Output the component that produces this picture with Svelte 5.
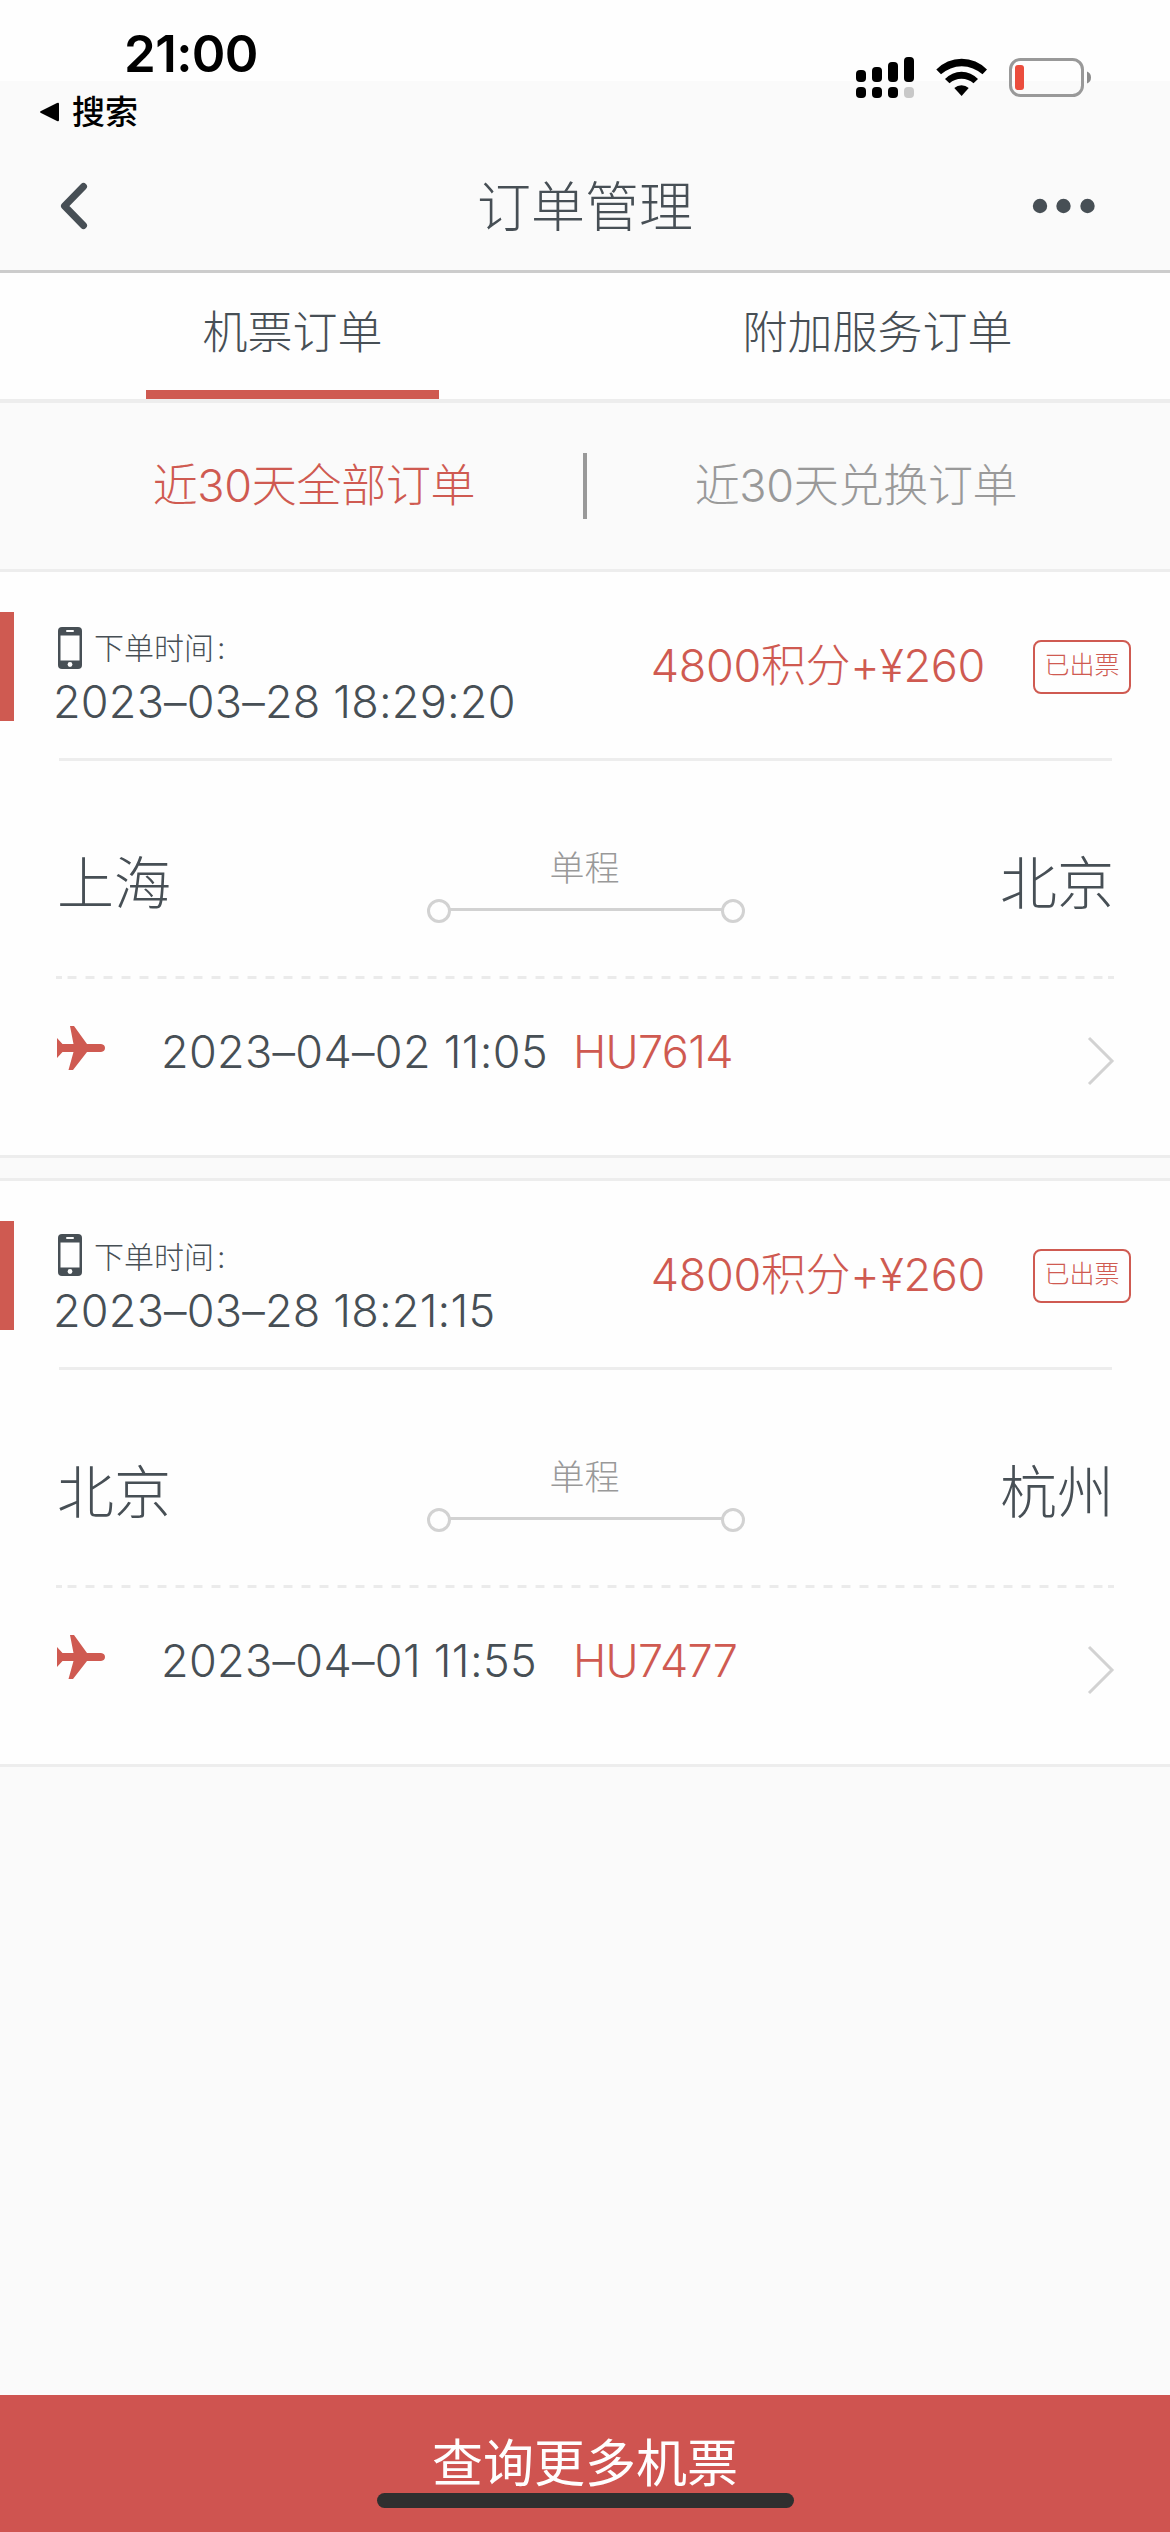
<script>
  const tabs = ["机票订单", "附加服务订单"];
  const filters = ["近30天全部订单", "近30天兑换订单"];

  const orders = [
    {
      created: "2023–03–28 18:29:20",
      price: "4800积分+¥260",
      status: "已出票",
      from: "上海",
      to: "北京",
      depart: "2023–04–02 11:05",
      flight: "HU7614"
    },
    {
      created: "2023–03–28 18:21:15",
      price: "4800积分+¥260",
      status: "已出票",
      from: "北京",
      to: "杭州",
      depart: "2023–04–01 11:55",
      flight: "HU7477"
    }
  ];

  let activeTab = $state(0);
  let activeFilter = $state(0);
</script>

<div class="page">
  <header>
    <div class="status">
      <div class="clock">21:00</div>
      <svg class="status-icons" width="240" height="44" viewBox="0 0 240 44">
        <rect x="1" y="15" width="10" height="12" rx="4" />
        <rect x="17" y="12" width="10" height="15" rx="4" />
        <rect x="33" y="7" width="10" height="20" rx="4" />
        <rect x="49" y="2" width="10" height="25" rx="4" />
        <rect x="1" y="32" width="10" height="11" rx="4" />
        <rect x="17" y="32" width="10" height="11" rx="4" />
        <rect x="33" y="32" width="10" height="11" rx="4" />
        <rect x="49" y="32" width="10" height="11" rx="4" fill="#c8c8c8" />
        <path d="M81.300 14.500 A35 35 0 0 1 132 14.500 L127.500 19.300 A31 31 0 0 0 86 19.300 Z" />
        <path d="M90 24 A22.500 22.500 0 0 1 123 24 L118.500 28.300 A18 18 0 0 0 94.500 28.300 Z" />
        <path d="M99.300 33 A10.500 10.500 0 0 1 113.700 33 L106.600 41 Z" />
        <rect x="155.500" y="4.500" width="72" height="36" rx="10" fill="none" stroke="#999" stroke-width="3" />
        <rect x="160" y="10" width="9" height="25" rx="3" fill="#eb4d3d" />
        <path d="M232 16.500 Q236 18 236 22.500 Q236 27 232 28.500 Z" fill="#8c8c8c" />
      </svg>
    </div>
    <div class="return">
      <svg width="22" height="22" viewBox="0 0 22 22">
        <path d="M2 10 L18 2 Q20 1 20 3 V19 Q20 21 18 20 L2 12 Q0 11 2 10 Z" />
      </svg>
      <span>搜索</span>
    </div>
    <nav>
      <svg width="28" height="48" viewBox="0 0 28 48">
        <path d="M23.500 4.500 L4.500 24 L23.500 43.500" fill="none" stroke="#474f55" stroke-width="7" stroke-linecap="round" stroke-linejoin="round" />
      </svg>
      <h1>订单管理</h1>
      <svg class="dots" width="64" height="16" viewBox="0 0 64 16" fill="#474f55">
        <circle cx="8" cy="8" r="7.200" />
        <circle cx="31.500" cy="8" r="7.200" />
        <circle cx="55.500" cy="8" r="7.200" />
      </svg>
    </nav>
  </header>

  <div class="tabs">
    {#each tabs as tab, i}
      <button class="tab" class:active={i === activeTab} onclick={() => (activeTab = i)}>
        <span>{tab}</span>
      </button>
    {/each}
  </div>

  <div class="filters">
    {#each filters as filter, i}
      <button class="filter" class:active={i === activeFilter} onclick={() => (activeFilter = i)}>
        {filter}
      </button>
    {/each}
  </div>

  <main>
    {#each orders as order}
      <section class="order">
        <div class="head">
          <div class="created">
            <div class="label">
              <svg width="24" height="42" viewBox="0 0 24 42">
                <rect width="24" height="42" rx="4" fill="#474f55" />
                <rect x="2.500" y="8.500" width="19" height="25" fill="#fefefe" />
                <rect x="8" y="3" width="8" height="2" rx="1" fill="#fefefe" />
                <circle cx="12" cy="37.500" r="2.400" fill="#fefefe" />
              </svg>
              <span>下单时间<i>:</i></span>
            </div>
            <div class="stamp">{order.created}</div>
          </div>
          <div class="price">{order.price}</div>
          <div class="badge">{order.status}</div>
        </div>

        <div class="route">
          <span class="city">{order.from}</span>
          <div class="way">
            <span>单程</span>
            <svg width="318" height="24" viewBox="0 0 318 24" fill="none" stroke="#d2d2d2" stroke-width="3">
              <circle cx="12" cy="12" r="10.500" />
              <path d="M23 10.500 H295" />
              <circle cx="306" cy="12" r="10.500" />
            </svg>
          </div>
          <span class="city">{order.to}</span>
        </div>

        <svg class="dashes" width="1058" height="3" viewBox="0 0 1058 3">
          <path d="M0 1.500 H6 M11.500 1.500 H1046.500" />
          <path d="M1052 1.500 H1058" />
        </svg>

        <div class="flight">
          <svg class="plane" width="48" height="44" viewBox="0 0 48 44">
            <path d="M0 12 L5.500 18 H16.500 L13 0 H17 L30 18 H44 Q48 18.500 48 22 Q48 25.500 44 26 H30 L16 44 H11.500 L16.500 26 H5.500 L0 32 Z" />
          </svg>
          <span class="depart">{order.depart}</span>
          <span class="number">{order.flight}</span>
          <svg class="arrow" width="28" height="50" viewBox="0 0 28 50">
            <path d="M2 2 L25 25 L2 48" fill="none" stroke="#d2d2d2" stroke-width="3" />
          </svg>
        </div>
      </section>
    {/each}
  </main>

  <footer>
    <button class="more">查询更多机票</button>
    <div class="home"></div>
  </footer>
</div>

<style>
  :global(body) {
    margin: 0;
  }
  .page {
    display: flex;
    flex-direction: column;
    box-sizing: border-box;
    width: 1170px;
    height: 2532px;
    background: #fafafa;
    color: #474f55;
    font-family: Inter, "Noto Sans CJK SC", sans-serif;
    font-weight: 300;
    overflow: hidden;
  }
  button {
    margin: 0;
    padding: 0;
    border: 0;
    background: none;
    color: inherit;
    font: inherit;
  }
  svg {
    display: block;
    flex: none;
  }
  header {
    height: 270px;
    border-bottom: 3px solid #ccc;
    background: linear-gradient(#fefefe 81px, #fafafa 81px);
  }
  .status {
    display: flex;
    justify-content: space-between;
    height: 92px;
    padding: 0 75px 0 124px;
    color: #000;
  }
  .clock {
    font-size: 51px;
    font-weight: 600;
    letter-spacing: -0.6px;
    line-height: 108px;
  }
  .status-icons {
    margin-top: 55px;
  }
  .return {
    display: flex;
    align-items: center;
    height: 40px;
    padding-left: 39px;
    gap: 11px;
    color: #000;
    font-size: 33px;
    font-weight: 500;
    line-height: 40px;
  }
  nav {
    display: grid;
    grid-template-columns: 1fr auto 1fr;
    align-items: center;
    height: 148px;
    padding: 0 60px;
  }
  .dots {
    justify-self: end;
    margin-right: 14px;
  }
  h1 {
    margin: 3px 0 0;
    font-size: 54px;
    font-weight: 300;
    line-height: 145px;
  }
  .tabs {
    display: flex;
    height: 126px;
    border-bottom: 4px solid #ededed;
    background: #fefefe;
  }
  .tab {
    display: flex;
    flex: 1;
    justify-content: center;
    font-size: 45px;
    line-height: 120px;
  }
  .tab span {
    width: 293px;
    height: 117px;
    white-space: nowrap;
  }
  .tab.active span {
    border-bottom: 9px solid #cf5a51;
  }
  .filters {
    display: flex;
    align-items: center;
    height: 166px;
    padding: 0 45px;
    border-bottom: 3px solid #ededed;
    color: #999;
  }
  .filter {
    flex: 1;
    height: 66px;
    font-size: 45px;
    letter-spacing: -0.3px;
    line-height: 66px;
  }
  .filter + .filter {
    border-left: 4px solid #999;
  }
  .filter.active {
    color: #cf5a51;
  }
  .order {
    height: 543px;
    margin-bottom: 20px;
    padding-top: 40px;
    border-bottom: 3px solid #ededed;
    background: #fefefe;
  }
  .order + .order {
    border-top: 3px solid #ededed;
  }
  .head {
    display: flex;
    align-items: center;
    height: 109px;
    padding: 0 39px 0 41px;
    border-left: 14px solid #cf5a51;
  }
  .created {
    flex: 1;
    align-self: flex-start;
    padding-top: 15px;
  }
  .label {
    display: flex;
    align-items: center;
    gap: 12px;
    height: 42px;
    padding-left: 3px;
    font-size: 30px;
  }
  .label span {
    margin-bottom: 4px;
  }
  .order + .order .label svg {
    margin-bottom: 5px;
  }
  .label i {
    margin-left: 3px;
    font-style: normal;
  }
  .stamp {
    margin-left: -2px;
    font-size: 45px;
    letter-spacing: 0.2px;
    line-height: 66px;
  }
  .price {
    margin-bottom: 8px;
    color: #cf5a51;
    font-size: 45px;
    letter-spacing: -0.3px;
  }
  .badge {
    box-sizing: border-box;
    width: 98px;
    height: 54px;
    margin-left: 48px;
    border: 2px solid #cf5a51;
    border-radius: 8px;
    color: #cf5a51;
    font-size: 25px;
    line-height: 46px;
    text-align: center;
  }
  .route {
    display: flex;
    align-items: center;
    justify-content: space-between;
    height: 215px;
    margin: 37px 58px 0 59px;
    border-top: 3px solid #ededed;
  }
  .city {
    margin: 20px -2px 0;
    font-size: 57px;
  }
  .way {
    margin-top: 29px;
    color: #999;
    font-size: 35px;
    line-height: 50px;
    text-align: center;
  }
  .way span {
    margin-right: 2px;
  }
  .way svg {
    margin-top: 6px;
  }
  .dashes {
    margin-left: 56px;
    stroke: #ebebeb;
    stroke-width: 3px;
    stroke-dasharray: 9px 9px;
  }
  .flight {
    display: flex;
    align-items: center;
    height: 150px;
    padding: 0 55px 0 57px;
    font-size: 45px;
  }
  .plane {
    margin-bottom: 12px;
    fill: #cf5a51;
  }
  .depart {
    width: 412px;
    margin: 0 0 5px 56px;
    letter-spacing: 0.3px;
  }
  .number {
    flex: 1;
    margin-bottom: 5px;
    color: #cf5a51;
    letter-spacing: -0.7px;
  }
  .arrow {
    margin-top: 14px;
  }
  footer {
    display: flex;
    flex-direction: column;
    align-items: center;
    height: 137px;
    margin-top: auto;
    background: #cf5450;
  }
  .more {
    height: 98px;
    padding-top: 40px;
    box-sizing: border-box;
    color: #fefefe;
    font-size: 51px;
    font-weight: 400;
    line-height: 58px;
  }
  .home {
    width: 417px;
    height: 15px;
    border-radius: 8px;
    background: #2f2f2f;
  }
</style>
